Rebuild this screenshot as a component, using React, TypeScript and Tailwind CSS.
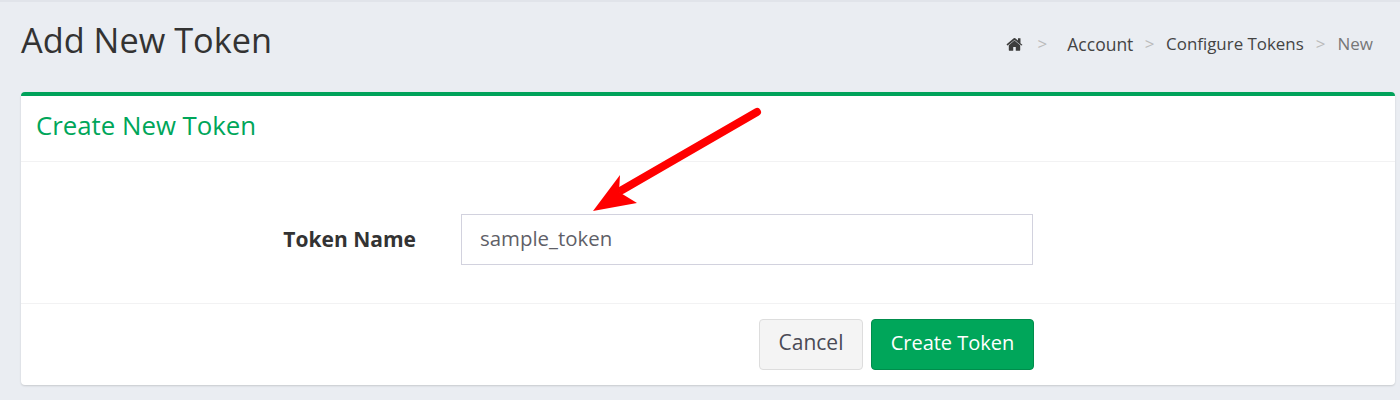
export default function App() {
  return (
    <div className="relative h-[400px] overflow-hidden bg-[#eaedf2] font-['Open_Sans','Liberation_Sans',sans-serif] text-[#333]">
      <div className="h-[2px] bg-[#e1e4ea]" />
      <div className="flex h-[90px] items-start justify-between pl-[21px] pr-[27px]">
        <h1 className="mt-[15px] text-[34.3px] leading-[46px] font-normal text-[#333]">Add New Token</h1>
        <nav className="mt-[32px] flex items-center text-[17px] leading-[20px] text-[#444]">
          <svg viewBox="0 0 1664 1312" className="h-[13px] w-[17px] fill-[#3d3d3d]">
            <path d="M1408 736v480q0 26-19 45t-45 19H960V896H704v384H320q-26 0-45-19t-19-45V736q0-1 .5-3t.5-3l575-474 575 474q1 2 1 6zm223-69-62 74q-8 9-21 11h-3q-13 0-21-7L832 200 140 745q-12 8-24 7-13-2-21-11l-62-74q-8-10-7-23.500t11-21.500L756 35q32-26 76-26t76 26l272 227V45q0-14 9-23t23-9h192q14 0 23 9t9 23v480l219 182q10 8 11 21.500t-7 23.500z" />
          </svg>
          <span className="ml-[15px] mr-[20px] text-[#bbb]">&gt;</span>
          <span className="text-[17.5px]">Account</span>
          <span className="mx-[11.5px] text-[#bbb]">&gt;</span>
          <span className="text-[16.9px]">Configure Tokens</span>
          <span className="mx-[12px] text-[#bbb]">&gt;</span>
          <span className="text-[#777]">New</span>
        </nav>
      </div>

      <div className="ml-[21px] w-[1374px] rounded-[4px] border-t-4 border-[#00a25a] bg-white shadow-[0_1px_2px_rgba(0,0,0,0.15)]">
        <div className="flex h-[66px] items-center border-b border-[#f2f2f3] pl-[15px] pb-[6px]">
          <h2 className="text-[25.8px] font-normal text-[#00a65a]">Create New Token</h2>
        </div>
        <div className="flex h-[142px] items-start border-b border-[#f2f2f3] pt-[52px]">
          <label className="w-[395px] text-right text-[21px] leading-[51px] font-bold text-[#333]">Token Name</label>
          <div className="ml-[45px] flex h-[51px] w-[572px] items-center border border-[#d2d2de] bg-white px-[18px] pb-[2px] text-[20.4px] text-[#5f5f68]">
            sample_token
          </div>
        </div>
        <div className="flex h-[81px] items-start pt-[15px] pl-[738px]">
          <button className="h-[51px] w-[104px] rounded-[4px] border border-[#ddd] bg-[#f4f4f4] pb-[4px] text-[21px] text-[#4a4a55]">Cancel</button>
          <button className="ml-[8px] h-[51px] w-[163px] rounded-[4px] border border-[#008d4c] bg-[#00a65a] pb-[4px] text-[20px] text-white">Create Token</button>
        </div>
      </div>

      <svg className="absolute left-0 top-0 h-[400px] w-[1400px]" viewBox="0 0 1400 400">
        <path d="M757 112 L622 190" stroke="#ff0000" strokeWidth="8" strokeLinecap="round" fill="none" />
        <path d="M593 211 L620 175 L619 192 L637 203 Z" fill="#ff0000" />
      </svg>
    </div>
  )
}
